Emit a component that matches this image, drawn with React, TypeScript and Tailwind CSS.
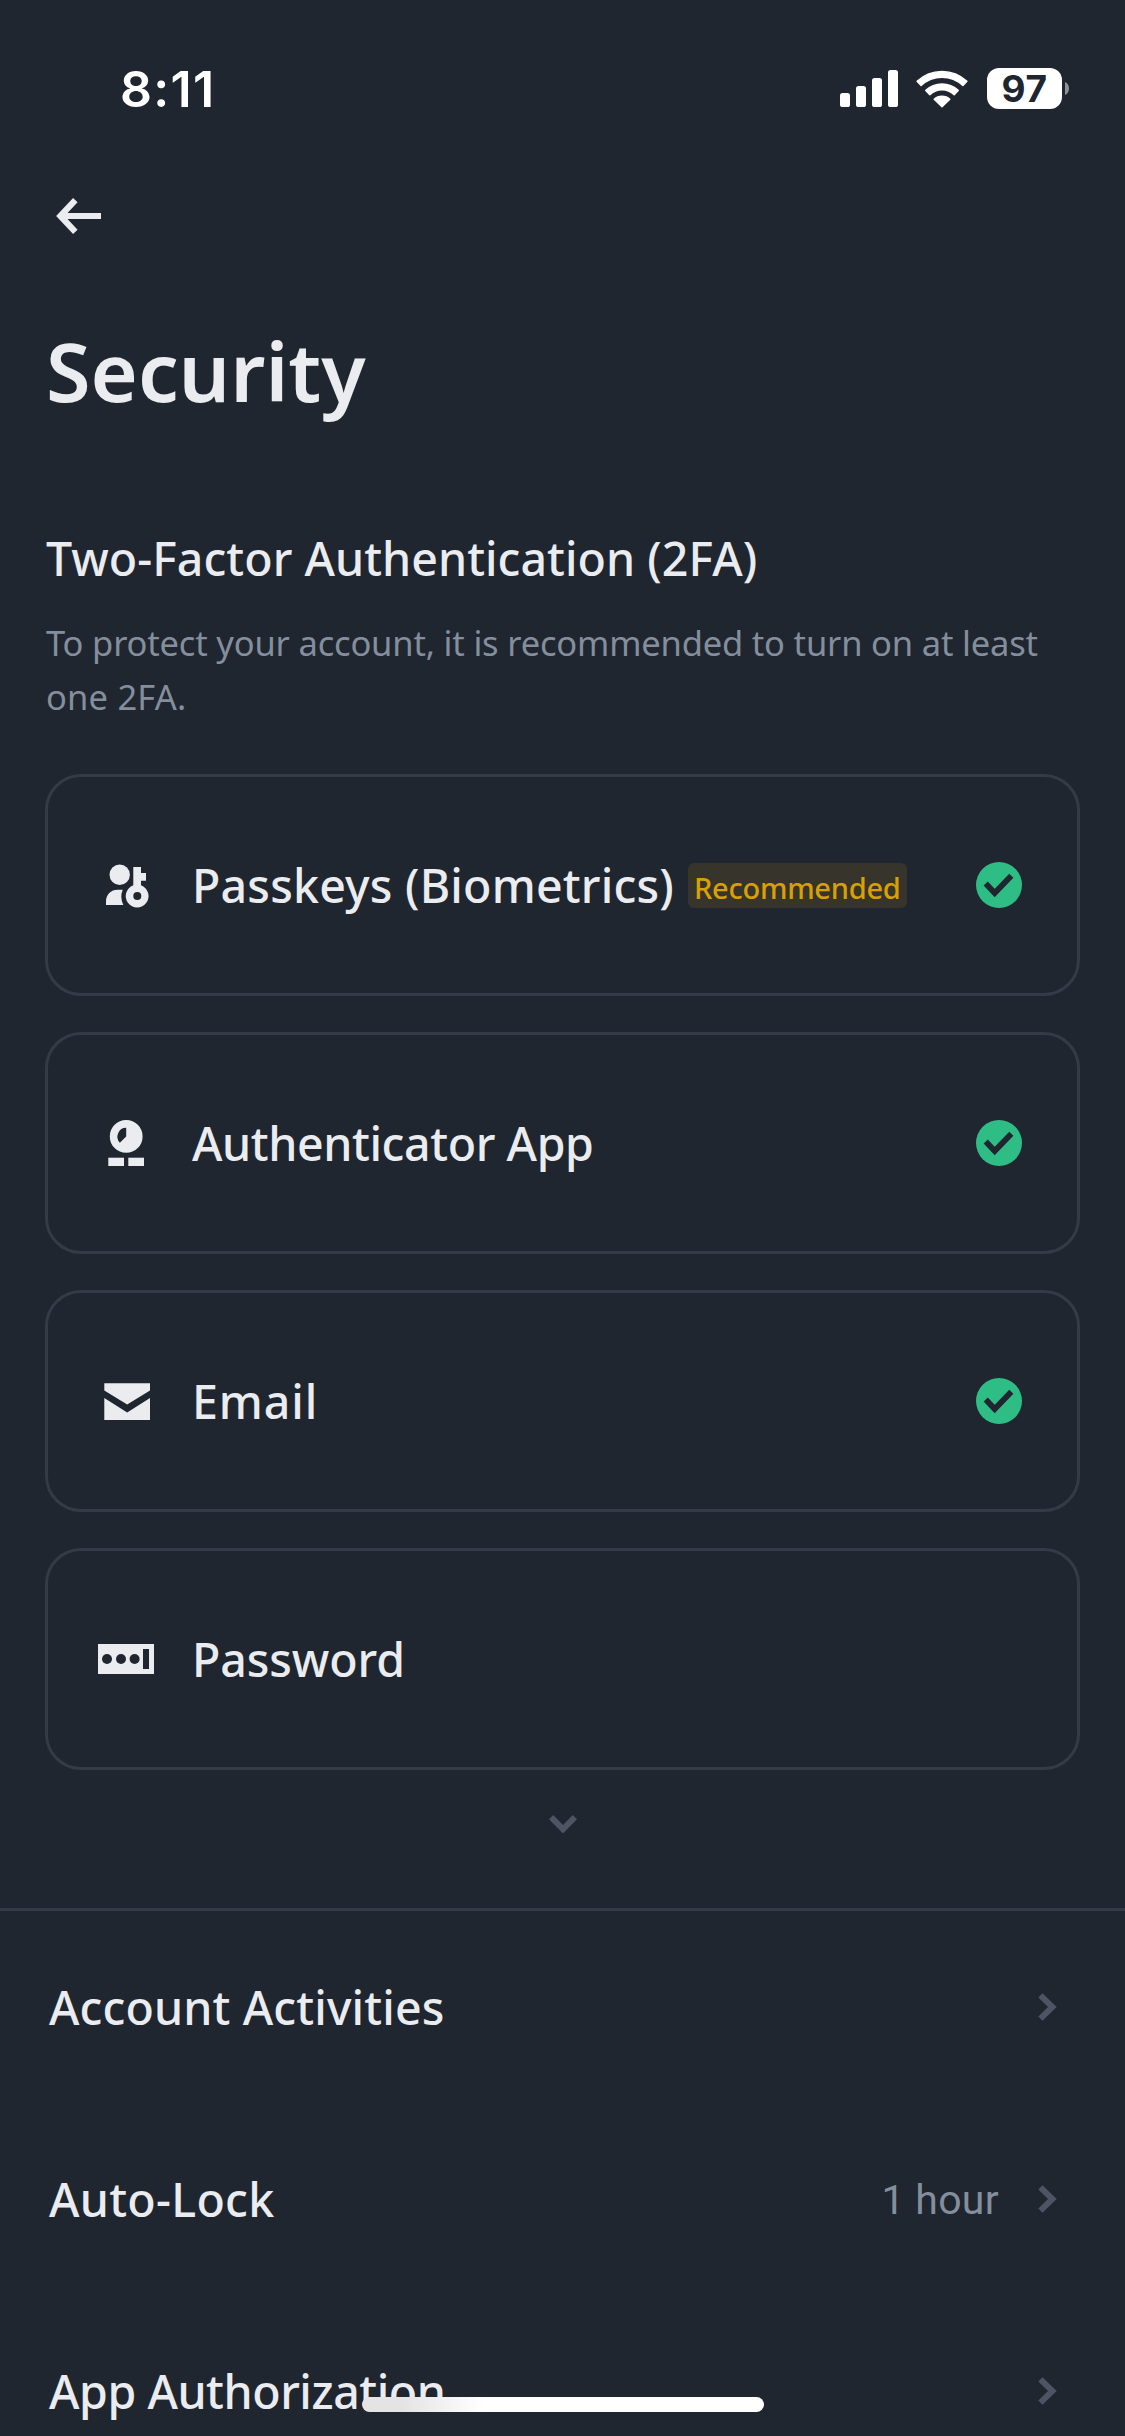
import type { ReactNode } from "react";

function StatusBar() {
  return (
    <div className="flex h-[177px] shrink-0 items-center justify-between pr-14 pl-[120px] text-white">
      <span className="pt-px font-['Inter',sans-serif] text-[50px] leading-[60px] font-semibold tracking-[1.3px]">
        8:11
      </span>
      <div className="flex items-center">
        <svg className="h-[37px] w-[58px]" viewBox="0 0 58 37" fill="currentColor">
          <rect x="0" y="23" width="10" height="14" rx="2.6" />
          <rect x="16" y="16" width="10" height="21" rx="2.6" />
          <rect x="32" y="8" width="10" height="29" rx="2.6" />
          <rect x="48" y="0" width="10" height="37" rx="2.6" />
        </svg>
        <svg
          className="ml-[18px] h-[38px] w-[52px]"
          viewBox="0 0 52 38"
          fill="currentColor"
          stroke="currentColor"
          strokeWidth="1.5"
          strokeLinejoin="round"
        >
          <path d="M1.1 11.3A36.2 36.2 0 0 1 50.9 11.3L46.9 15.5A30.4 30.4 0 0 0 5.1 15.5Z" />
          <path d="M9.8 20.4A23.6 23.6 0 0 1 42.2 20.4L38.2 24.7A17.7 17.7 0 0 0 13.8 24.7Z" />
          <path d="M18.2 29.3A11.3 11.3 0 0 1 33.8 29.3L26 36.7Z" />
        </svg>
        <div className="ml-[19px] flex h-[41px] w-[75px] items-center justify-center rounded-[12px] bg-white font-['Inter',sans-serif] text-[37px] leading-[41px] font-bold tracking-[0.5px] text-[#20262f]">
          97
        </div>
        <svg className="ml-[3px] h-[13px] w-1" viewBox="0 0 4 13" fill="#8f9297">
          <path d="M0 0C2.6 1.1 4 3.6 4 6.5S2.6 11.9 0 13Z" />
        </svg>
      </div>
    </div>
  );
}

function PasskeyIcon() {
  return (
    <svg className="size-[60px]" viewBox="0 0 60 60" fill="currentColor">
      <circle cx="22.7" cy="19.8" r="10.2" />
      <path d="M9 50V46.5C9 39.5 14 34.7 20.5 34.7H25.7Q22.6 42.5 26.3 50Z" />
      <path
        fillRule="evenodd"
        d="M36.3 12H44V18H49V25.7H44V30.3A11.4 11.4 0 1 1 36.3 30.3ZM40.3 37A4 4 0 1 0 40.3 45A4 4 0 1 0 40.3 37Z"
      />
    </svg>
  );
}

function AuthenticatorIcon() {
  return (
    <svg className="size-[60px]" viewBox="0 0 60 60" fill="currentColor">
      <path
        fillRule="evenodd"
        d="M29.2 7A16.4 16.4 0 1 0 29.2 39.8A16.4 16.4 0 1 0 29.2 7ZM29.2 14.8V23.6L22.9 29.7A8.8 8.8 0 0 1 29.2 14.8Z"
      />
      <rect x="11.3" y="44.7" width="15.7" height="8.3" />
      <rect x="31.3" y="44.7" width="15.7" height="8.3" />
    </svg>
  );
}

function EmailIcon() {
  return (
    <svg className="size-[60px]" viewBox="0 0 60 60" fill="currentColor">
      <path d="M7.3 12.3H53V19.6L30.2 33.4L7.3 19.6Z" />
      <path d="M7.3 27L30.2 41.4L53 27V49H7.3Z" />
    </svg>
  );
}

function PasswordIcon() {
  return (
    <svg className="size-[60px]" viewBox="0 0 60 60">
      <rect x="1" y="15" width="56" height="30" fill="currentColor" />
      <g fill="#20262f">
        <circle cx="10" cy="30" r="5" />
        <circle cx="24" cy="30" r="5" />
        <circle cx="37.6" cy="30" r="5" />
        <rect x="46" y="20" width="6" height="20" />
      </g>
    </svg>
  );
}

function CheckBadge() {
  return (
    <svg className="size-[46px]" viewBox="0 0 46 46" fill="none">
      <circle cx="23" cy="23" r="23" fill="#2ebd85" />
      <path d="M9.7 21.6L18.7 31L35.3 13.8" stroke="#20262f" strokeWidth="5.8" />
    </svg>
  );
}

function ChevronRight() {
  return (
    <svg className="h-7 w-5" viewBox="0 0 20 28" fill="none">
      <path d="M2.4 2.4L14.4 14L2.4 25.6" stroke="#4d5564" strokeWidth="6" />
    </svg>
  );
}

type Method = { label: string; icon: ReactNode; tracking: string; tag?: string; enabled: boolean };

const methods: Method[] = [
  {
    label: "Passkeys (Biometrics)",
    icon: <PasskeyIcon />,
    tracking: "tracking-[0.2px]",
    tag: "Recommended",
    enabled: true,
  },
  { label: "Authenticator App", icon: <AuthenticatorIcon />, tracking: "tracking-[-0.4px]", enabled: true },
  { label: "Email", icon: <EmailIcon />, tracking: "tracking-[0.9px]", enabled: true },
  { label: "Password", icon: <PasswordIcon />, tracking: "tracking-[-0.08px]", enabled: false },
];

const settings = [
  { label: "Account Activities", tracking: "tracking-[0.13px]", value: "" },
  { label: "Auto-Lock", tracking: "tracking-[0.3px]", value: "1 hour" },
  { label: "App Authorization", tracking: "tracking-[-0.45px]", value: "" },
];

function MethodCard({ method }: { method: Method }) {
  return (
    <li className="flex h-[222px] items-center rounded-[36px] border-[3px] border-[#333b47] pr-[55px] pl-[49px]">
      {method.icon}
      <span className={`ml-[35px] text-[46.5px] leading-[60px] font-medium ${method.tracking}`}>{method.label}</span>
      {method.tag && (
        <span className="mt-px ml-[14px] flex h-[45px] w-[219px] items-center rounded-[6px] bg-[#36342b] pt-1 pl-[6px] text-[29px] leading-[41px] font-medium tracking-[-0.24px] text-[#d9a003]">
          {method.tag}
        </span>
      )}
      {method.enabled && (
        <span className="ml-auto">
          <CheckBadge />
        </span>
      )}
    </li>
  );
}

export default function App() {
  return (
    <div className="relative flex h-[2436px] w-[1125px] flex-col overflow-hidden bg-[#20262f] font-['Noto_Sans',sans-serif] text-[#eaecef]">
      <StatusBar />
      <header className="flex h-[78px] shrink-0 items-center pl-14">
        <svg className="h-9 w-[46px]" viewBox="0 0 46 36" fill="none" stroke="currentColor" strokeWidth="6.2">
          <path d="M45 18H5" />
          <path d="M19.3 2.2L4.4 18L19.3 33.8" />
        </svg>
      </header>

      <section className="flex shrink-0 flex-col px-[45px]">
        <h1 className="mt-[67px] pl-px text-[81px] leading-[97px] font-semibold">Security</h1>
        <h2 className="mt-[109px] pl-px text-[46.5px] leading-[60px] font-medium tracking-[0.04px]">
          Two-Factor Authentication (2FA)
        </h2>
        <p className="mt-7 pl-px text-[34.5px] leading-[54px] tracking-[-0.17px] text-[#848e9c]">
          To protect your account, it is recommended to turn on at least
          <br />
          <span className="tracking-[0.2px]">one 2FA.</span>
        </p>
        <ul className="mt-[50px] flex flex-col gap-9">
          {methods.map((method) => (
            <MethodCard key={method.label} method={method} />
          ))}
        </ul>
      </section>

      <div className="flex h-[141px] shrink-0 justify-center border-b-[3px] border-[#333b47] pt-[45px]">
        <svg className="h-[19px] w-7" viewBox="0 0 28 19" fill="none">
          <path d="M2.1 2.1L14 14.3L25.9 2.1" stroke="#4d5564" strokeWidth="6" />
        </svg>
      </div>

      <ul className="flex shrink-0 flex-col">
        {settings.map((row) => (
          <li key={row.label} className="flex h-48 items-center pr-[67px] pl-[49px]">
            <span className={`text-[46.5px] leading-[60px] font-medium ${row.tracking}`}>{row.label}</span>
            <span className="mr-[39px] ml-auto pt-px font-['Roboto',sans-serif] text-[41px] leading-[60px] tracking-[0.32px] text-[#848e9c]">
              {row.value}
            </span>
            <ChevronRight />
          </li>
        ))}
      </ul>

      <div className="absolute bottom-6 left-[362px] h-[15px] w-[402px] rounded-full bg-linear-to-r from-[#e4e4e4] from-10% to-white to-30%" />
    </div>
  );
}
